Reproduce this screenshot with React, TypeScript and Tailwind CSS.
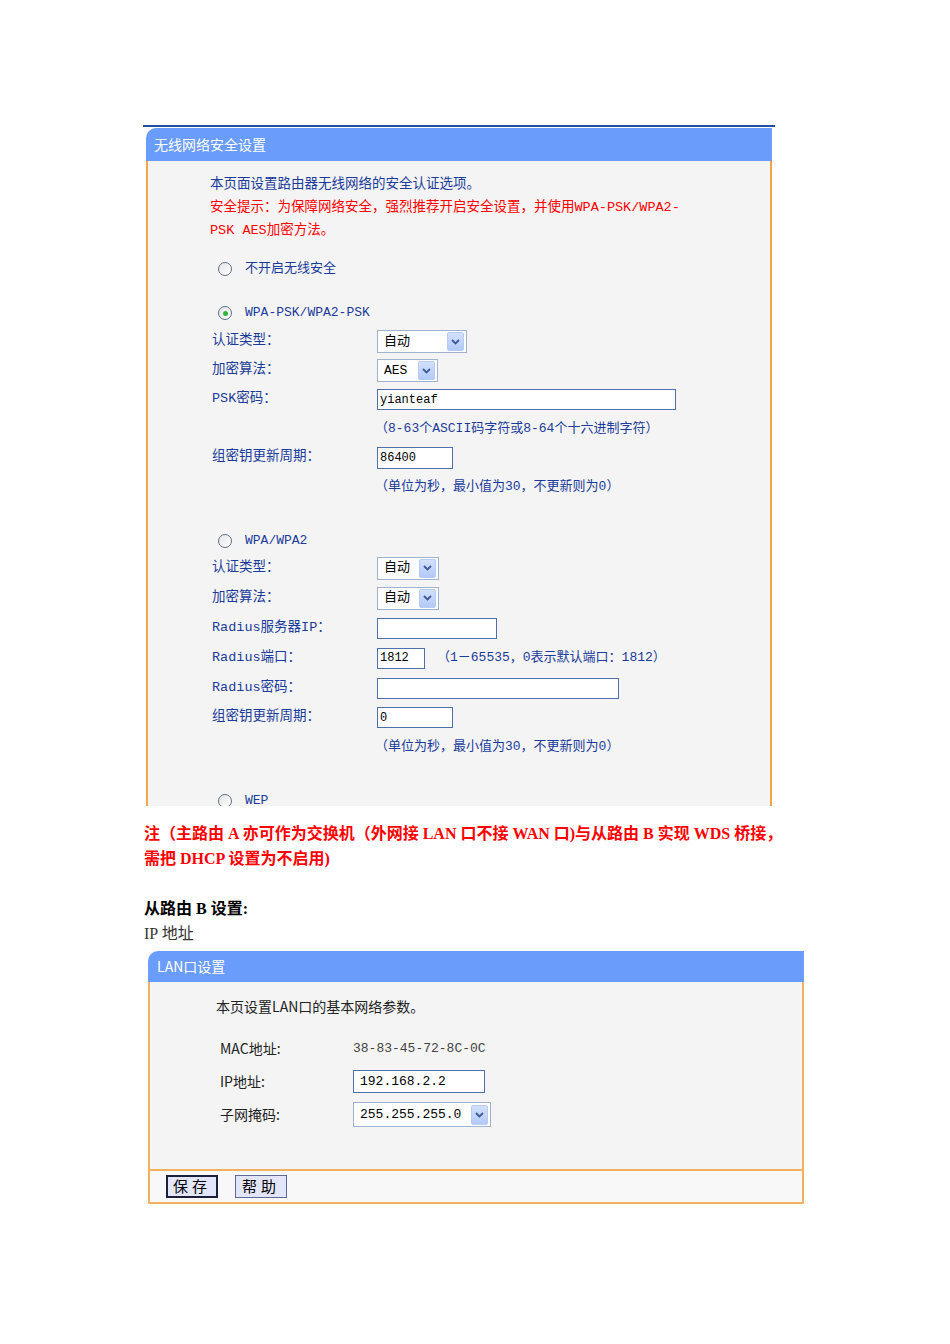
const cjk = "font-['Liberation_Mono','Noto_Sans_CJK_SC',monospace]";

function Radio({ checked }: { checked?: boolean }) {
  return (
    <span className="flex h-[14px] w-[14px] items-center justify-center rounded-full border border-[#5f7186] bg-gradient-to-br from-[#e4e4e4] to-white">
      {checked && <span className="h-[5px] w-[5px] rounded-full bg-[#2db83a]" />}
    </span>
  );
}

function Arrow({ h = 19 }: { h?: number }) {
  return (
    <span
      className="mr-[2px] flex w-[17px] items-center justify-center rounded-[2px] border border-[#b7cbf3] bg-gradient-to-b from-[#d3e0fd] to-[#b3c9f7]"
      style={{ height: h }}
    >
      <svg width="9" height="6" viewBox="0 0 9 6">
        <path d="M1 1 L4.5 4.5 L8 1" fill="none" stroke="#3d5a9a" strokeWidth="1.8" />
      </svg>
    </span>
  );
}

function Select({ value, w }: { value: string; w: number }) {
  return (
    <div className="flex h-[23px] items-center border border-[#9fb2cf] bg-white" style={{ width: w }}>
      <span className="flex-1 pl-[6px] text-[13px] text-black">{value}</span>
      <Arrow />
    </div>
  );
}

function Input({ value, w, h = 21 }: { value?: string; w: number; h?: number }) {
  return (
    <div
      className="flex items-center border border-[#4d6fae] bg-white pl-[2px] text-[12px] text-black"
      style={{ width: w, height: h }}
    >
      {value}
    </div>
  );
}

function Row({ label, h, children }: { label: string; h: number; children?: React.ReactNode }) {
  return (
    <div className="flex items-center" style={{ height: h }}>
      <span className="w-[165px] shrink-0 text-[13.5px] text-[#1a3b9a]">{label}</span>
      {children}
    </div>
  );
}

function Hint({ text, h }: { text: string; h: number }) {
  return (
    <div className="flex items-center pl-[163px] text-[13px] text-[#1a3b9a]" style={{ height: h }}>
      {text}
    </div>
  );
}

function RadioRow({ label, checked, className }: { label: string; checked?: boolean; className: string }) {
  return (
    <div className={`flex h-[24px] items-center pl-[6px] ${className}`}>
      <Radio checked={checked} />
      <span className="ml-[13px] text-[13px] text-[#1a3b9a]">{label}</span>
    </div>
  );
}

function WirelessPanel() {
  return (
    <div className={`ml-[143px] w-[632px] border-t-2 border-[#1f4f9e] pt-[1px] ${cjk}`}>
      <div className="mx-[3px]">
        <div className="flex h-[33px] items-center rounded-tl-[10px] bg-[#6a9cfb] pl-[8px] text-[14px] text-white font-['Noto_Sans_CJK_SC',sans-serif]">
          无线网络安全设置
        </div>
        <div className="h-[645px] overflow-hidden border-x-2 border-[#f3a54a] bg-[#f4f4f4] pl-[64px] pt-[12px]">
          <div className="-ml-[2px] text-[13.5px] leading-[23px]">
            <p className="text-[#1a3b9a]">本页面设置路由器无线网络的安全认证选项。</p>
            <p className="text-[#ff0000]">安全提示：为保障网络安全，强烈推荐开启安全设置，并使用WPA-PSK/WPA2-</p>
            <p className="text-[#ff0000]">PSK AES加密方法。</p>
          </div>
          <RadioRow label="不开启无线安全" className="mt-[15px]" />
          <RadioRow label="WPA-PSK/WPA2-PSK" checked className="mt-[20px]" />
          <div className="mt-[2px]">
            <Row label="认证类型：" h={29}>
              <Select value="自动" w={90} />
            </Row>
            <Row label="加密算法：" h={29}>
              <Select value="AES" w={61} />
            </Row>
            <Row label="PSK密码：" h={29}>
              <Input value="yianteaf" w={299} />
            </Row>
            <Hint text="（8-63个ASCII码字符或8-64个十六进制字符）" h={29} />
            <Row label="组密钥更新周期：" h={29}>
              <Input value="86400" w={76} h={22} />
            </Row>
            <Hint text="（单位为秒，最小值为30，不更新则为0）" h={29} />
          </div>
          <RadioRow label="WPA/WPA2" className="mt-[28px]" />
          <div>
            <Row label="认证类型：" h={30}>
              <Select value="自动" w={62} />
            </Row>
            <Row label="加密算法：" h={30}>
              <Select value="自动" w={62} />
            </Row>
            <Row label="Radius服务器IP：" h={30}>
              <Input w={120} />
            </Row>
            <Row label="Radius端口：" h={30}>
              <Input value="1812" w={48} />
              <span className="ml-[12px] text-[13px] text-[#1a3b9a]">（1－65535，0表示默认端口：1812）</span>
            </Row>
            <Row label="Radius密码：" h={30}>
              <Input w={242} />
            </Row>
            <Row label="组密钥更新周期：" h={29}>
              <Input value="0" w={76} />
            </Row>
            <Hint text="（单位为秒，最小值为30，不更新则为0）" h={29} />
          </div>
          <RadioRow label="WEP" className="mt-[28px]" />
        </div>
      </div>
    </div>
  );
}

function LanPanel() {
  return (
    <div className="ml-[148px] w-[656px] font-['Noto_Sans_CJK_SC',sans-serif]">
      <div className="flex h-[31px] items-center rounded-tl-[10px] bg-[#6a9cfb] pl-[9px] text-[14px] text-white">
        LAN口设置
      </div>
      <div className="h-[187px] border-x-2 border-[#f3b15e] bg-[#f4f4f4] pl-[66px] pt-[14px]">
        <p className="h-[20px] text-[14px] leading-[20px] text-[#222]">本页设置LAN口的基本网络参数。</p>
        <div className="mt-[16px] pl-[4px] text-[14px] text-[#222]">
          <div className="flex h-[33px] items-center">
            <span className="w-[133px]">MAC地址:</span>
            <span className="font-['Liberation_Mono',monospace] text-[13px] text-[#444]">38-83-45-72-8C-0C</span>
          </div>
          <div className="flex h-[33px] items-center">
            <span className="w-[133px]">IP地址:</span>
            <div className="flex h-[23px] w-[132px] items-center border border-[#4d6fae] bg-white pl-[6px] font-['Liberation_Mono',monospace] text-[13px] text-black">
              192.168.2.2
            </div>
          </div>
          <div className="flex h-[33px] items-center">
            <span className="w-[133px]">子网掩码:</span>
            <div className="flex h-[25px] w-[138px] items-center border border-[#9fb2cf] bg-white">
              <span className="flex-1 pl-[6px] font-['Liberation_Mono',monospace] text-[13px] text-black">255.255.255.0</span>
              <Arrow h={20} />
            </div>
          </div>
        </div>
      </div>
      <div className="flex h-[35px] items-center gap-[17px] border-x-2 border-y-2 border-[#f3b15e] bg-[#f8f8f8] pl-[16px]">
        <button className="flex h-[23px] w-[52px] items-center justify-center border-2 border-[#1c1f3a] bg-[#e3e6fa] text-[15px] tracking-[4px] text-black">
          保存
        </button>
        <button className="flex h-[23px] w-[52px] items-center justify-center border border-[#5b6a9a] bg-[#e3e6fa] text-[15px] tracking-[4px] text-black">
          帮助
        </button>
      </div>
    </div>
  );
}

export default function App() {
  return (
    <div className="min-h-[1344px] w-[950px] bg-white pt-[125px]">
      <WirelessPanel />
      <div className="ml-[144px] mt-[15px] font-['Liberation_Serif','Noto_Sans_CJK_SC',serif] text-[16px]">
        <p className="font-bold leading-[25px] text-[#ff0000]">
          注（主路由 A 亦可作为交换机（外网接 LAN 口不接 WAN 口)与从路由 B 实现 WDS 桥接，
          <br />
          需把 DHCP 设置为不启用)
        </p>
        <p className="mt-[25px] font-bold leading-[25px] text-black">从路由 B 设置:</p>
        <p className="leading-[25px] text-[#333]">IP 地址</p>
      </div>
      <div className="mt-[5px]">
        <LanPanel />
      </div>
    </div>
  );
}
